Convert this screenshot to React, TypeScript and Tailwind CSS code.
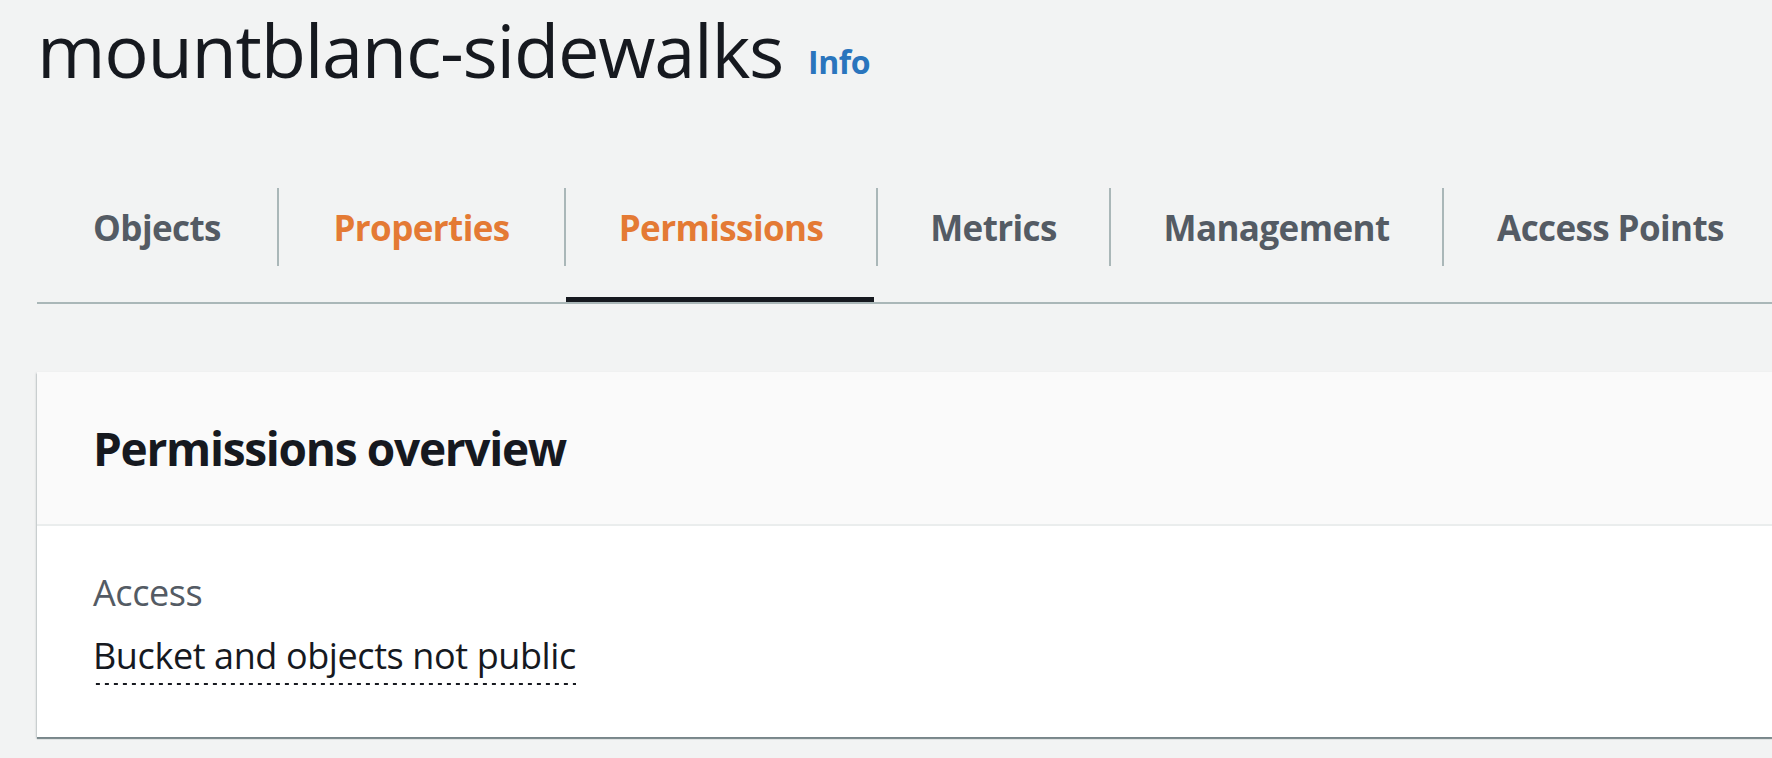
const TABS = [
  { label: 'Objects', width: 'w-[240px]', color: 'text-[#545b64]', active: false },
  { label: 'Properties', width: 'w-[287px]', color: 'text-[#e47a34]', active: false },
  { label: 'Permissions', width: 'w-[312px]', color: 'text-[#e47a34]', active: true },
  { label: 'Metrics', width: 'w-[233px]', color: 'text-[#545b64]', active: false },
  { label: 'Management', width: 'w-[333px]', color: 'text-[#545b64]', active: false },
  { label: 'Access Points', width: 'w-[335px]', color: 'text-[#545b64]', active: false },
];

export default function App() {
  return (
    <div className="min-h-screen overflow-hidden bg-[#f2f3f3] pl-[37px] font-['Open_Sans',sans-serif] text-[#16191f]">
      {/* page header */}
      <div className="flex h-[114px] items-start pt-[2px]">
        <h1 className="text-[74px] font-normal leading-[96px] tracking-[-1.3px]">mountblanc-sidewalks</h1>
        <a className="ml-[25px] mt-[38px] text-[32px] font-bold leading-[44px] tracking-[-0.4px] text-[#2a75bd]">Info</a>
      </div>

      {/* tabs */}
      <div className="mt-[74px] flex border-b-2 border-[#aab7b8]">
        {TABS.map((tab, i) => (
          <div key={tab.label} className={`flex h-[114px] shrink-0 flex-col ${tab.width}`}>
            <div
              className={`flex h-[78px] items-center justify-center pt-[2px] text-[35px] font-bold tracking-[-0.6px] ${tab.color} ${
                i > 0 ? 'border-l-2 border-[#aab7b8]' : ''
              }`}
            >
              {tab.label}
            </div>
            <div className="flex-1" />
            {tab.active ? <div className="mx-[2px] h-[5px] bg-[#16191f]" /> : <div className="h-[5px]" />}
          </div>
        ))}
      </div>

      {/* permissions overview card */}
      <div className="mt-[68px] h-[365px] bg-white shadow-[0_2px_1px_0_rgba(0,28,36,0.45),-1px_1px_2px_0_rgba(0,28,36,0.15)]">
        <div className="flex h-[154px] items-center border-b-2 border-[#eaeded] bg-[#fafafa] px-[56px]">
          <h2 className="text-[46px] font-bold leading-none tracking-[-1.3px]">Permissions overview</h2>
        </div>
        <div className="px-[56px] pt-[42px]">
          <div className="text-[36px] leading-[50px] tracking-[-0.4px] text-[#545b64]">Access</div>
          <div className="mt-[15px] inline-block bg-[linear-gradient(to_right,#16191f_4px,transparent_4px)] bg-[length:9px_2px] bg-bottom bg-repeat-x pb-[6px] text-[36px] leading-[46px] tracking-[-0.4px]">
            Bucket and objects not public
          </div>
        </div>
      </div>
    </div>
  );
}
